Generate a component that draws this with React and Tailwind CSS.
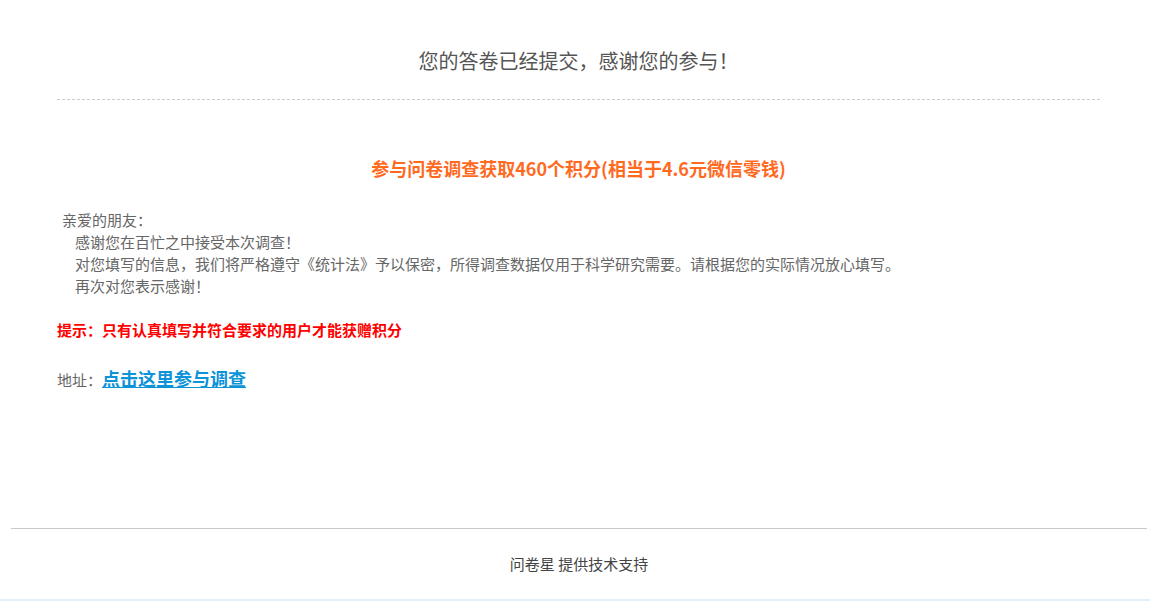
import React from 'react';

export default function App() {
  const font = { fontFamily: '"Microsoft YaHei", "Noto Sans CJK SC", "Noto Sans", sans-serif' };

  return (
    <div className="w-[1150px] h-[601px] bg-white flex flex-col overflow-hidden" style={font}>
      <div className="mx-[57px] w-[1043px] flex flex-col">
        {/* title */}
        <div className="pt-[46px] pb-[23px] text-center text-[20px] leading-[30px] text-[#555]">
          您的答卷已经提交，感谢您的参与！
        </div>
        <div className="border-t border-dashed border-[#cccccc]" />

        {/* points heading */}
        <div className="mt-[55px] text-center text-[18px] leading-[26px] font-bold text-[#ff6a1f]">
          参与问卷调查获取460个积分(相当于4.6元微信零钱)
        </div>

        {/* letter */}
        <div className="mt-[28px] text-[15px] leading-[22px] text-[#666]">
          <div className="pl-[5px]">亲爱的朋友：</div>
          <div className="pl-[18px]">感谢您在百忙之中接受本次调查！</div>
          <div className="pl-[18px]">
            对您填写的信息，我们将严格遵守《统计法》予以保密，所得调查数据仅用于科学研究需要。请根据您的实际情况放心填写。
          </div>
          <div className="pl-[18px]">再次对您表示感谢！</div>
        </div>

        <div className="mt-[22px] text-[15px] leading-[22px] font-bold text-[#ff0000]">
          提示：只有认真填写并符合要求的用户才能获赠积分
        </div>

        <div className="mt-[22px] flex items-baseline text-[15px] leading-[30px] text-[#666]">
          <span>地址：</span>
          <a href="#" className="text-[18px] font-bold text-[#0d93d8] underline">
            点击这里参与调查
          </a>
        </div>
      </div>

      {/* footer */}
      <div className="mt-auto ml-[11px] mr-[3px] border-t border-[#c8c8c8] h-[71px] flex items-center justify-center text-[15px] text-[#444]">
        问卷星 提供技术支持
      </div>
      <div className="h-[2px] bg-[#e3eef6]" />
    </div>
  );
}
